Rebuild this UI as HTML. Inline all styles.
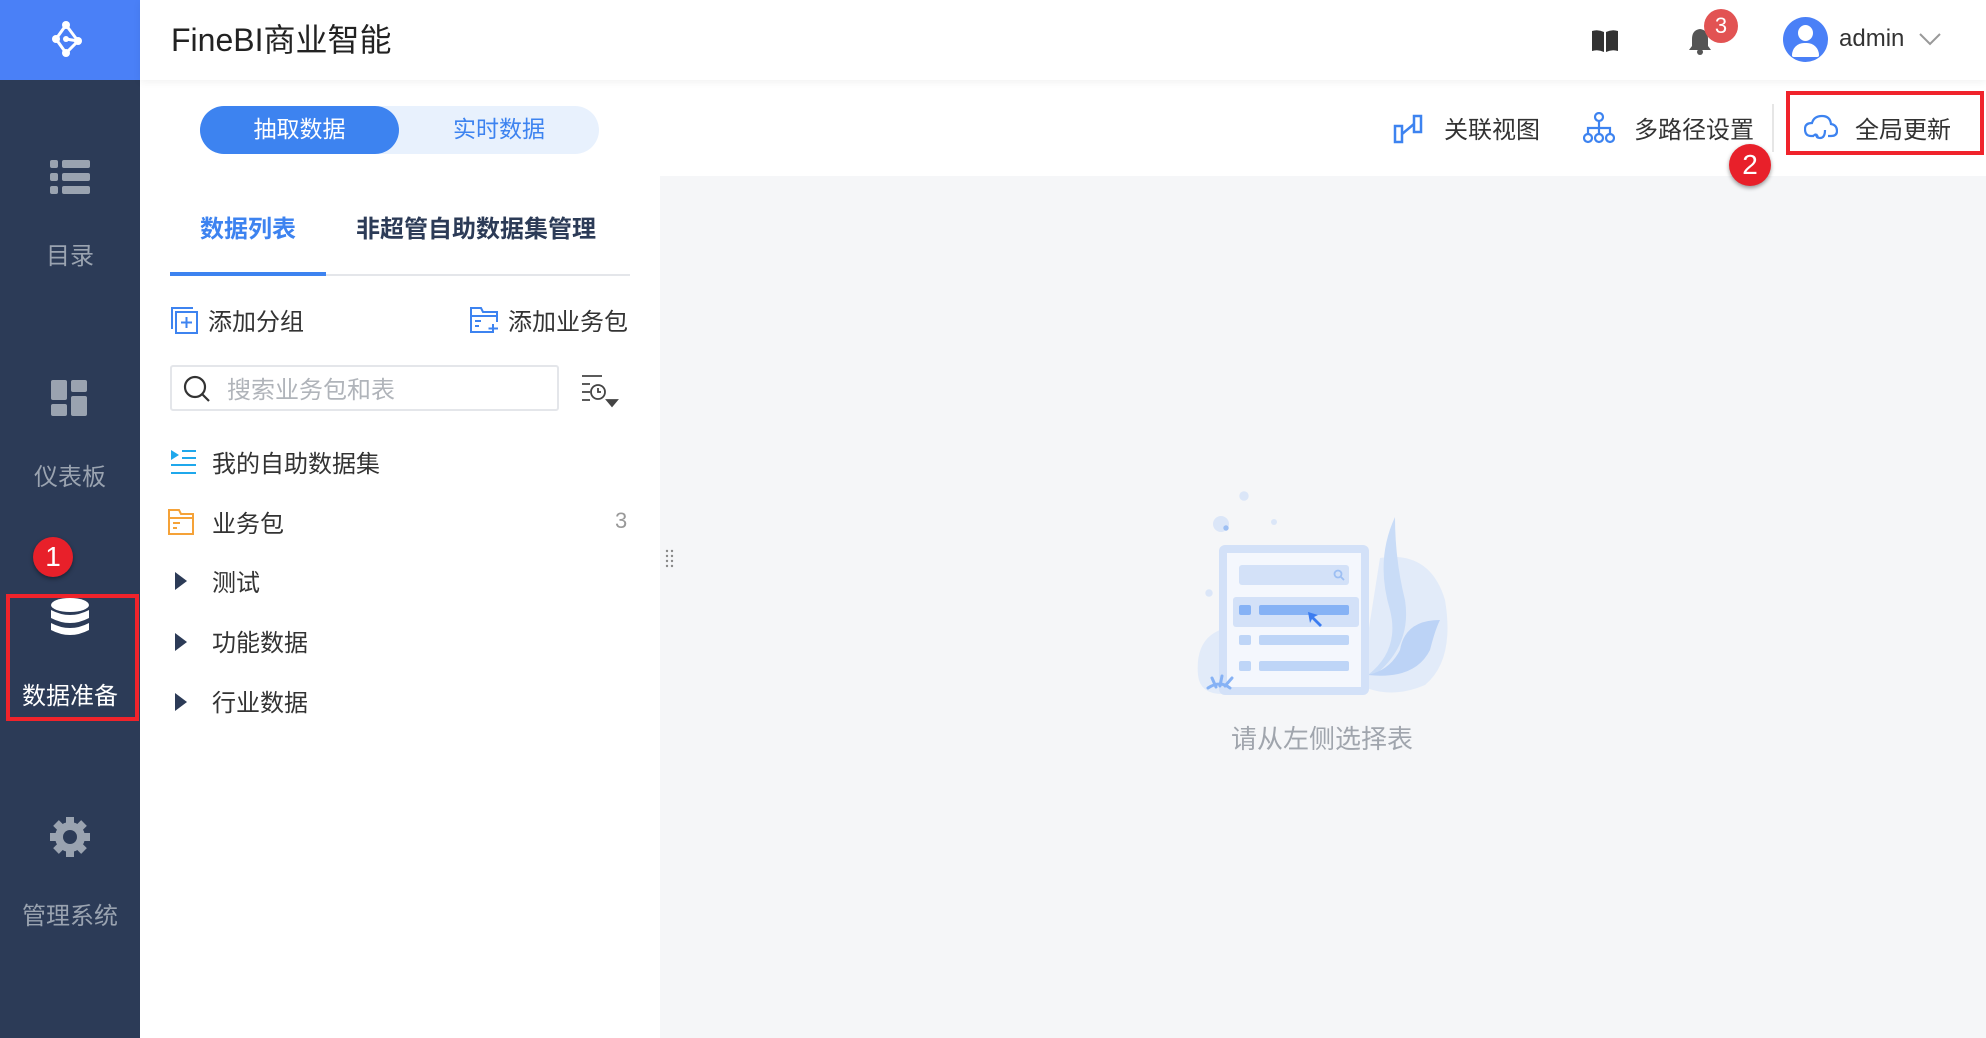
<!DOCTYPE html>
<html><head><meta charset="utf-8"><style>
*{margin:0;padding:0;box-sizing:border-box}
body{width:1986px;height:1038px;overflow:hidden;background:#fff;font-family:"Liberation Sans","Noto Sans CJK SC",sans-serif;position:relative;color:#333}
.a{position:absolute}
.sb{left:0;top:0;width:140px;height:1038px;background:#2c3b57}
.logo{left:0;top:0;width:140px;height:80px;background:#4a80f7}
.sl{width:140px;text-align:center;font-size:24px;color:#9aa3b0}
.hdr{left:140px;top:0;width:1846px;height:80px;background:#fff;box-shadow:0 2px 8px rgba(0,0,0,.06)}
.t{font-size:24px;color:#333;white-space:nowrap}
</style></head><body>
<div class="a sb"></div>
<div class="a logo"><svg class="a" style="left:48px;top:19px" width="42" height="42" viewBox="0 0 42 42"><g stroke="#fff" stroke-width="3" fill="none"><path d="M18 6 L8 20 L18 34 L30 22 L18 20 M18 6 L30 22"/></g><g fill="#fff"><circle cx="18" cy="6" r="4"/><circle cx="8" cy="20" r="4"/><circle cx="18" cy="34" r="4"/><circle cx="30" cy="22" r="4"/><circle cx="18" cy="20" r="3"/></g></svg></div>
<svg class="a" style="left:50px;top:160px" width="40" height="36" viewBox="0 0 40 36" fill="#9aa3b0"><rect x="0" y="0" width="8" height="8" rx="2"/><rect x="12" y="0" width="28" height="8" rx="2"/><rect x="0" y="13" width="8" height="8" rx="2"/><rect x="12" y="13" width="28" height="8" rx="2"/><rect x="0" y="26" width="8" height="8" rx="2"/><rect x="12" y="26" width="28" height="8" rx="2"/></svg>
<div class="a sl" style="top:236px">目录</div>
<svg class="a" style="left:51px;top:380px" width="38" height="36" viewBox="0 0 38 36" fill="#9aa3b0"><rect x="0" y="0" width="16" height="20" rx="2"/><rect x="20" y="0" width="16" height="12" rx="2"/><rect x="0" y="24" width="16" height="12" rx="2"/><rect x="20" y="16" width="16" height="20" rx="2"/></svg>
<div class="a sl" style="top:457px">仪表板</div>
<svg class="a" style="left:50px;top:598px" width="40" height="40" viewBox="0 0 40 40" fill="#fff"><ellipse cx="20" cy="7" rx="19" ry="7"/><path d="M1 12 Q20 22 39 12 V20 Q20 30 1 20Z"/><path d="M1 25 Q20 35 39 25 V32 Q20 42 1 32Z"/></svg>
<div class="a sl" style="top:676px;color:#fff">数据准备</div>
<div class="a" style="left:6px;top:594px;width:133px;height:127px;border:4px solid #f0232b"></div>
<div class="a" style="left:33px;top:537px;width:40px;height:40px;border-radius:50%;background:#e8202a;color:#fff;font-size:28px;text-align:center;line-height:40px;box-shadow:0 2px 4px rgba(0,0,0,.4)">1</div>
<svg class="a" style="left:49px;top:816px" width="42" height="42" viewBox="0 0 42 42"><g fill="#9aa3b0"><circle cx="21" cy="21" r="15"/><g stroke="#9aa3b0" stroke-width="8"><path d="M21 1V41M1 21H41M7 7L35 35M35 7L7 35"/></g></g><circle cx="21" cy="21" r="7" fill="#2c3b57"/></svg>
<div class="a sl" style="top:896px">管理系统</div>
<div class="a hdr"></div>
<div class="a" style="left:171px;top:15px;font-size:32px;color:#222">FineBI商业智能</div>
<svg class="a" style="left:1591px;top:29px" width="28" height="24" viewBox="0 0 28 24" fill="#333"><path d="M1 2 Q7 0 13 3 V23 Q7 20 1 22Z M15 3 Q21 0 27 2 V22 Q21 20 15 23Z"/></svg>
<svg class="a" style="left:1688px;top:27px" width="24" height="28" viewBox="0 0 24 28" fill="#555"><path d="M12 2 Q4 3 4 12 V19 L1 23 H23 L20 19 V12 Q20 3 12 2Z"/><circle cx="12" cy="25" r="3"/></svg>
<div class="a" style="left:1704px;top:9px;width:34px;height:34px;border-radius:50%;background:#e25353;color:#fff;font-size:22px;text-align:center;line-height:34px">3</div>
<div class="a" style="left:1783px;top:17px;width:45px;height:45px;border-radius:50%;background:#4a80f7;overflow:hidden"><div class="a" style="left:15px;top:8px;width:15px;height:16px;border-radius:50%;background:#fff"></div><div class="a" style="left:9px;top:26px;width:27px;height:14px;border-radius:13px 13px 2px 2px;background:#fff"></div></div>
<div class="a" style="left:1839px;top:25px;font-size:24px;color:#333">admin</div>
<svg class="a" style="left:1918px;top:32px" width="24" height="14" viewBox="0 0 24 14"><path d="M2 2 L12 12 L22 2" stroke="#999" stroke-width="2" fill="none"/></svg>
<div class="a" style="left:660px;top:176px;width:1326px;height:862px;background:#f5f6f8"></div>
<div class="a" style="left:200px;top:106px;width:399px;height:48px;border-radius:24px;background:#e8f1fd"></div>
<div class="a" style="left:200px;top:106px;width:199px;height:48px;border-radius:24px;background:#3d83f0;color:#fff;font-size:23px;text-align:center;line-height:46px">抽取数据</div>
<div class="a" style="left:399px;top:106px;width:200px;height:48px;color:#3d83f0;font-size:23px;text-align:center;line-height:46px">实时数据</div>
<svg class="a" style="left:1393px;top:114px" width="30" height="30" viewBox="0 0 30 30" fill="none" stroke="#3d83f0" stroke-width="2.5"><rect x="2" y="12" width="7" height="16"/><rect x="21" y="2" width="7" height="16"/><path d="M9 20 L21 10"/></svg>
<div class="a t" style="left:1444px;top:110px">关联视图</div>
<svg class="a" style="left:1583px;top:112px" width="32" height="32" viewBox="0 0 32 32" fill="none" stroke="#3d83f0" stroke-width="2.2"><circle cx="16" cy="5" r="4"/><circle cx="5" cy="26" r="4"/><circle cx="16" cy="26" r="4"/><circle cx="27" cy="26" r="4"/><path d="M16 9V22M5 22V16H27V22"/></svg>
<div class="a t" style="left:1634px;top:110px">多路径设置</div>
<div class="a" style="left:1772px;top:104px;width:2px;height:48px;background:#e6e6e6"></div>
<svg class="a" style="left:1804px;top:114px" width="34" height="28" viewBox="0 0 34 28" fill="none" stroke="#3d83f0" stroke-width="2.2"><path d="M10 22 H7 Q1 22 1 15 Q1 9 8 9 Q10 2 18 2 Q26 2 27 10 Q33 11 33 17 Q33 22 27 22 H24"/><path d="M21 16 Q21 24 16 24 Q12 24 12 20 M12 20 L9 22 M12 20 L14 23"/></svg>
<div class="a t" style="left:1855px;top:110px">全局更新</div>
<div class="a" style="left:1786px;top:91px;width:198px;height:64px;border:4px solid #f0232b"></div>
<div class="a" style="left:1729px;top:144px;width:42px;height:42px;border-radius:50%;background:#e8202a;color:#fff;font-size:28px;text-align:center;line-height:42px;box-shadow:0 2px 4px rgba(0,0,0,.4)">2</div>
<div class="a" style="left:200px;top:209px;font-size:24px;font-weight:bold;color:#3d83f0">数据列表</div>
<div class="a" style="left:356px;top:209px;font-size:24px;font-weight:bold;color:#2c3b57">非超管自助数据集管理</div>
<div class="a" style="left:170px;top:274px;width:460px;height:2px;background:#e4e6ea"></div>
<div class="a" style="left:170px;top:272px;width:156px;height:4px;background:#3d83f0"></div>
<svg class="a" style="left:171px;top:307px" width="27" height="27" viewBox="0 0 27 27" fill="none" stroke="#3d83f0" stroke-width="2"><path d="M1 22V1H22"/><rect x="5" y="5" width="21" height="21"/><path d="M15.5 10V21M10 15.5H21"/></svg>
<div class="a t" style="left:208px;top:302px">添加分组</div>
<svg class="a" style="left:470px;top:306px" width="30" height="28" viewBox="0 0 30 28" fill="none" stroke="#3d83f0" stroke-width="2"><path d="M22 26H1V2H11L13 6H27V16"/><path d="M1 10H27M5 15H11M5 20H9M23 18V27M18.5 22.5H28"/></svg>
<div class="a t" style="left:508px;top:302px">添加业务包</div>
<div class="a" style="left:170px;top:365px;width:389px;height:46px;border:2px solid #e4e6ea;border-radius:3px"></div>
<svg class="a" style="left:182px;top:374px" width="30" height="30" viewBox="0 0 30 30" fill="none" stroke="#333" stroke-width="2.2"><circle cx="13" cy="13" r="10"/><path d="M20 20L27 27"/></svg>
<div class="a" style="left:227px;top:370px;font-size:24px;color:#b0b4ba">搜索业务包和表</div>
<svg class="a" style="left:580px;top:374px" width="42" height="36" viewBox="0 0 42 36" fill="none" stroke="#444" stroke-width="1.8"><path d="M2 2H22M2 10H10M2 18H10M2 26H10"/><circle cx="18" cy="18" r="7"/><path d="M18 14V18H21"/><path d="M27 26H37L32 32Z" fill="#444"/></svg>
<svg class="a" style="left:170px;top:449px" width="26" height="26" viewBox="0 0 26 26"><path d="M1 1L9 6L1 11Z" fill="#1fa8ec"/><g stroke="#1fa8ec" stroke-width="2"><path d="M12 2H26M12 9H26M1 16H26M1 24H26"/></g></svg>
<div class="a t" style="left:212px;top:444px">我的自助数据集</div>
<svg class="a" style="left:168px;top:509px" width="26" height="26" viewBox="0 0 26 26" fill="none" stroke="#f5a238" stroke-width="2"><path d="M1 25V1H11L13 5H25V25Z M1 9H25 M5 14H12 M5 19H9"/></svg>
<div class="a t" style="left:212px;top:504px">业务包</div>
<div class="a" style="left:615px;top:508px;font-size:22px;color:#999">3</div>
<svg class="a" style="left:175px;top:572px" width="12" height="18"><path d="M0 0L12 9L0 18Z" fill="#2c3b57"/></svg>
<div class="a t" style="left:212px;top:563px">测试</div>
<svg class="a" style="left:175px;top:633px" width="12" height="18"><path d="M0 0L12 9L0 18Z" fill="#2c3b57"/></svg>
<div class="a t" style="left:212px;top:623px">功能数据</div>
<svg class="a" style="left:175px;top:693px" width="12" height="18"><path d="M0 0L12 9L0 18Z" fill="#2c3b57"/></svg>
<div class="a t" style="left:212px;top:683px">行业数据</div>
<svg class="a" style="left:665px;top:549px" width="10" height="22" fill="#888"><circle cx="2" cy="2" r="1.2"/><circle cx="7" cy="2" r="1.2"/><circle cx="2" cy="7" r="1.2"/><circle cx="7" cy="7" r="1.2"/><circle cx="2" cy="12" r="1.2"/><circle cx="7" cy="12" r="1.2"/><circle cx="2" cy="17" r="1.2"/><circle cx="7" cy="17" r="1.2"/></svg>
<svg class="a" style="left:1150px;top:470px" width="320" height="300" viewBox="0 0 320 300">
<path d="M230 88 Q280 80 295 130 Q305 190 275 215 Q240 230 210 215Z" fill="#e2ebf9"/>
<path d="M70 160 Q45 170 48 205 Q50 225 75 224 L100 224 Z" fill="#e2ebf9"/>
<circle cx="94" cy="26" r="4.7" fill="#dbe6f8"/>
<circle cx="71" cy="54" r="8" fill="#dbe6f8"/><circle cx="76" cy="58" r="2.7" fill="#9dbff3"/>
<circle cx="124" cy="52" r="3" fill="#dbe6f8"/>
<circle cx="59" cy="123" r="3.7" fill="#dbe6f8"/>
<path d="M245 47 Q225 90 240 140 Q250 180 218 205 L225 205 Q262 175 255 130 Q245 90 245 47Z" fill="#c9dcf7"/>
<path d="M290 150 Q255 150 250 180 Q240 200 218 205 Q265 210 280 180 Q285 160 290 150Z" fill="#bcd3f6"/>
<rect x="69" y="75" width="150" height="150" rx="6" fill="#d3e1f8"/>
<rect x="77" y="83" width="134" height="134" fill="#f4f7fd"/>
<rect x="89" y="95" width="110" height="20" rx="3" fill="#d3e1f8"/>
<circle cx="188" cy="104" r="3.5" fill="none" stroke="#9dbff3" stroke-width="1.8"/><path d="M190.5 106.5L194 110" stroke="#9dbff3" stroke-width="1.8"/>
<rect x="83" y="127" width="126" height="30" rx="3" fill="#d3e1f8"/>
<rect x="89" y="135" width="12" height="10" rx="2" fill="#86b2f5"/>
<rect x="109" y="135" width="90" height="10" rx="2" fill="#86b2f5"/>
<rect x="89" y="165" width="12" height="10" rx="2" fill="#bed5f7"/><rect x="109" y="165" width="90" height="10" rx="2" fill="#bed5f7"/>
<rect x="89" y="191" width="12" height="10" rx="2" fill="#bed5f7"/><rect x="109" y="191" width="90" height="10" rx="2" fill="#bed5f7"/>
<path d="M158 142 L168 145 L164 147 L172 155 L170 157 L162 149 L160 153Z" fill="#3b7cf0"/>
<path d="M58 218 Q70 210 80 218 M66 217 L62 208 M70 216 L72 206 M75 216 L82 208" stroke="#86b2f5" stroke-width="3" fill="none" stroke-linecap="round"/>
</svg>
<div class="a" style="left:1212px;top:719px;width:220px;text-align:center;font-size:26px;color:#a0a5ad">请从左侧选择表</div>
</body></html>
